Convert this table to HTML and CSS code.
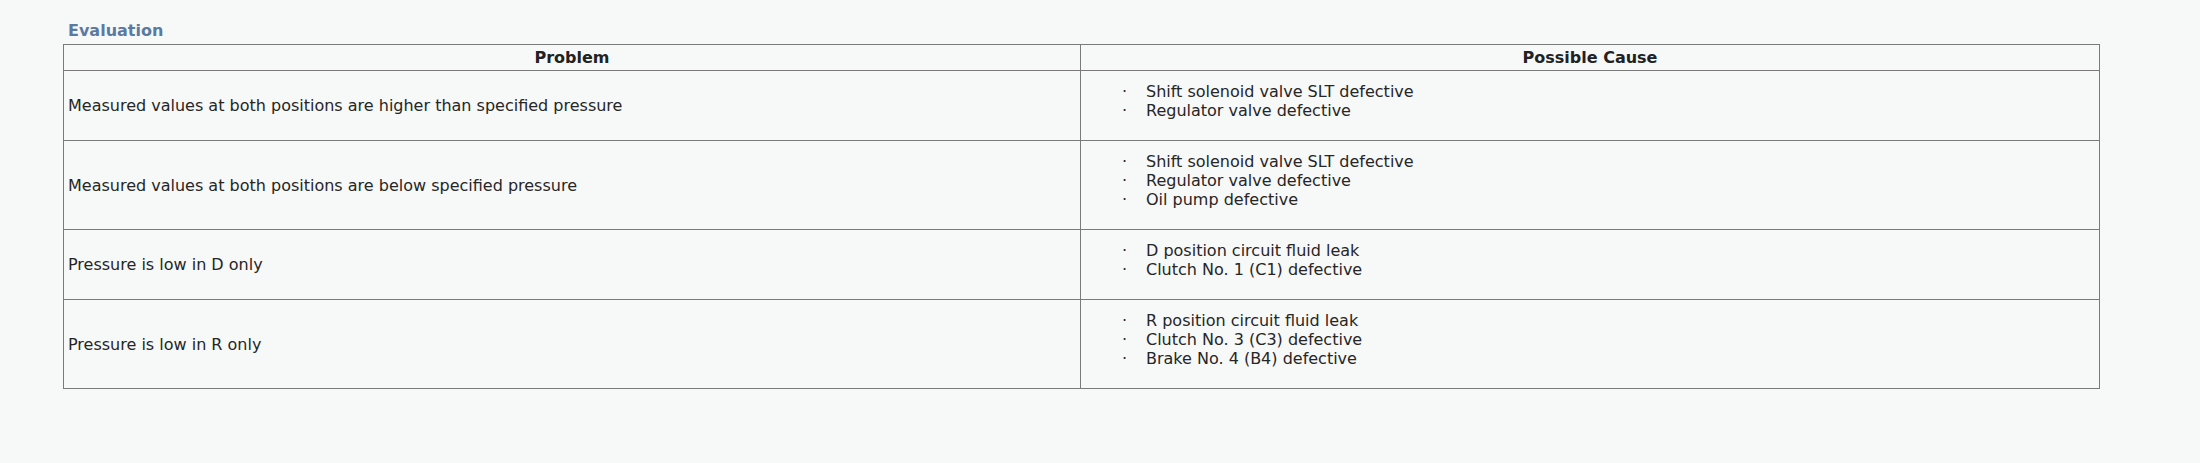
FILE: index.html
```html
<!DOCTYPE html>
<html lang="en">
<head>
<meta charset="utf-8">
<title>Evaluation</title>
<link rel="stylesheet" href="styles.css">
</head>
<body>
<div class="page">
  <h2 class="title">Evaluation</h2>
  <table class="eval">
    <colgroup><col class="c1"><col class="c2"></colgroup>
    <thead>
      <tr><th>Problem</th><th>Possible Cause</th></tr>
    </thead>
    <tbody>
      <tr>
        <td>Measured values at both positions are higher than specified pressure</td>
        <td><ul class="causes"><li>Shift solenoid valve SLT defective</li><li>Regulator valve defective</li></ul></td>
      </tr>
      <tr>
        <td>Measured values at both positions are below specified pressure</td>
        <td><ul class="causes"><li>Shift solenoid valve SLT defective</li><li>Regulator valve defective</li><li>Oil pump defective</li></ul></td>
      </tr>
      <tr>
        <td>Pressure is low in D only</td>
        <td><ul class="causes"><li>D position circuit fluid leak</li><li>Clutch No. 1 (C1) defective</li></ul></td>
      </tr>
      <tr>
        <td>Pressure is low in R only</td>
        <td><ul class="causes"><li>R position circuit fluid leak</li><li>Clutch No. 3 (C3) defective</li><li>Brake No. 4 (B4) defective</li></ul></td>
      </tr>
    </tbody>
  </table>
</div>
</body>
</html>
```

FILE: styles.css
```css
html, body {
  margin: 0;
  padding: 0;
  background: #f7f8f8;
}
body {
  font-family: "DejaVu Sans", Verdana, sans-serif;
  color: #262626;
  font-size: 16px;
  line-height: 19px;
}
.page {
  padding: 21px 100px 0 63px;
}
.title {
  margin: 0 0 3px 5px;
  font-size: 16px;
  line-height: 20px;
  font-weight: bold;
  color: #5b7aa2;
}
.eval {
  width: 2036px;
  border-collapse: collapse;
  table-layout: fixed;
}
.eval .c1 { width: 1017px; }
.eval .c2 { width: 1019px; }
.eval th,
.eval td {
  border: 1.5px solid #7a7a7a;
  padding: 3px 4px;
  vertical-align: middle;
  text-align: left;
}
.eval th {
  text-align: center;
  font-weight: bold;
  color: #222;
}
.causes {
  list-style: none;
  margin: 8px 0 17px;
  padding: 0 0 0 61px;
}
.causes li::before {
  content: "·";
  display: inline-block;
  width: 24px;
  margin-left: -24px;
}
```
